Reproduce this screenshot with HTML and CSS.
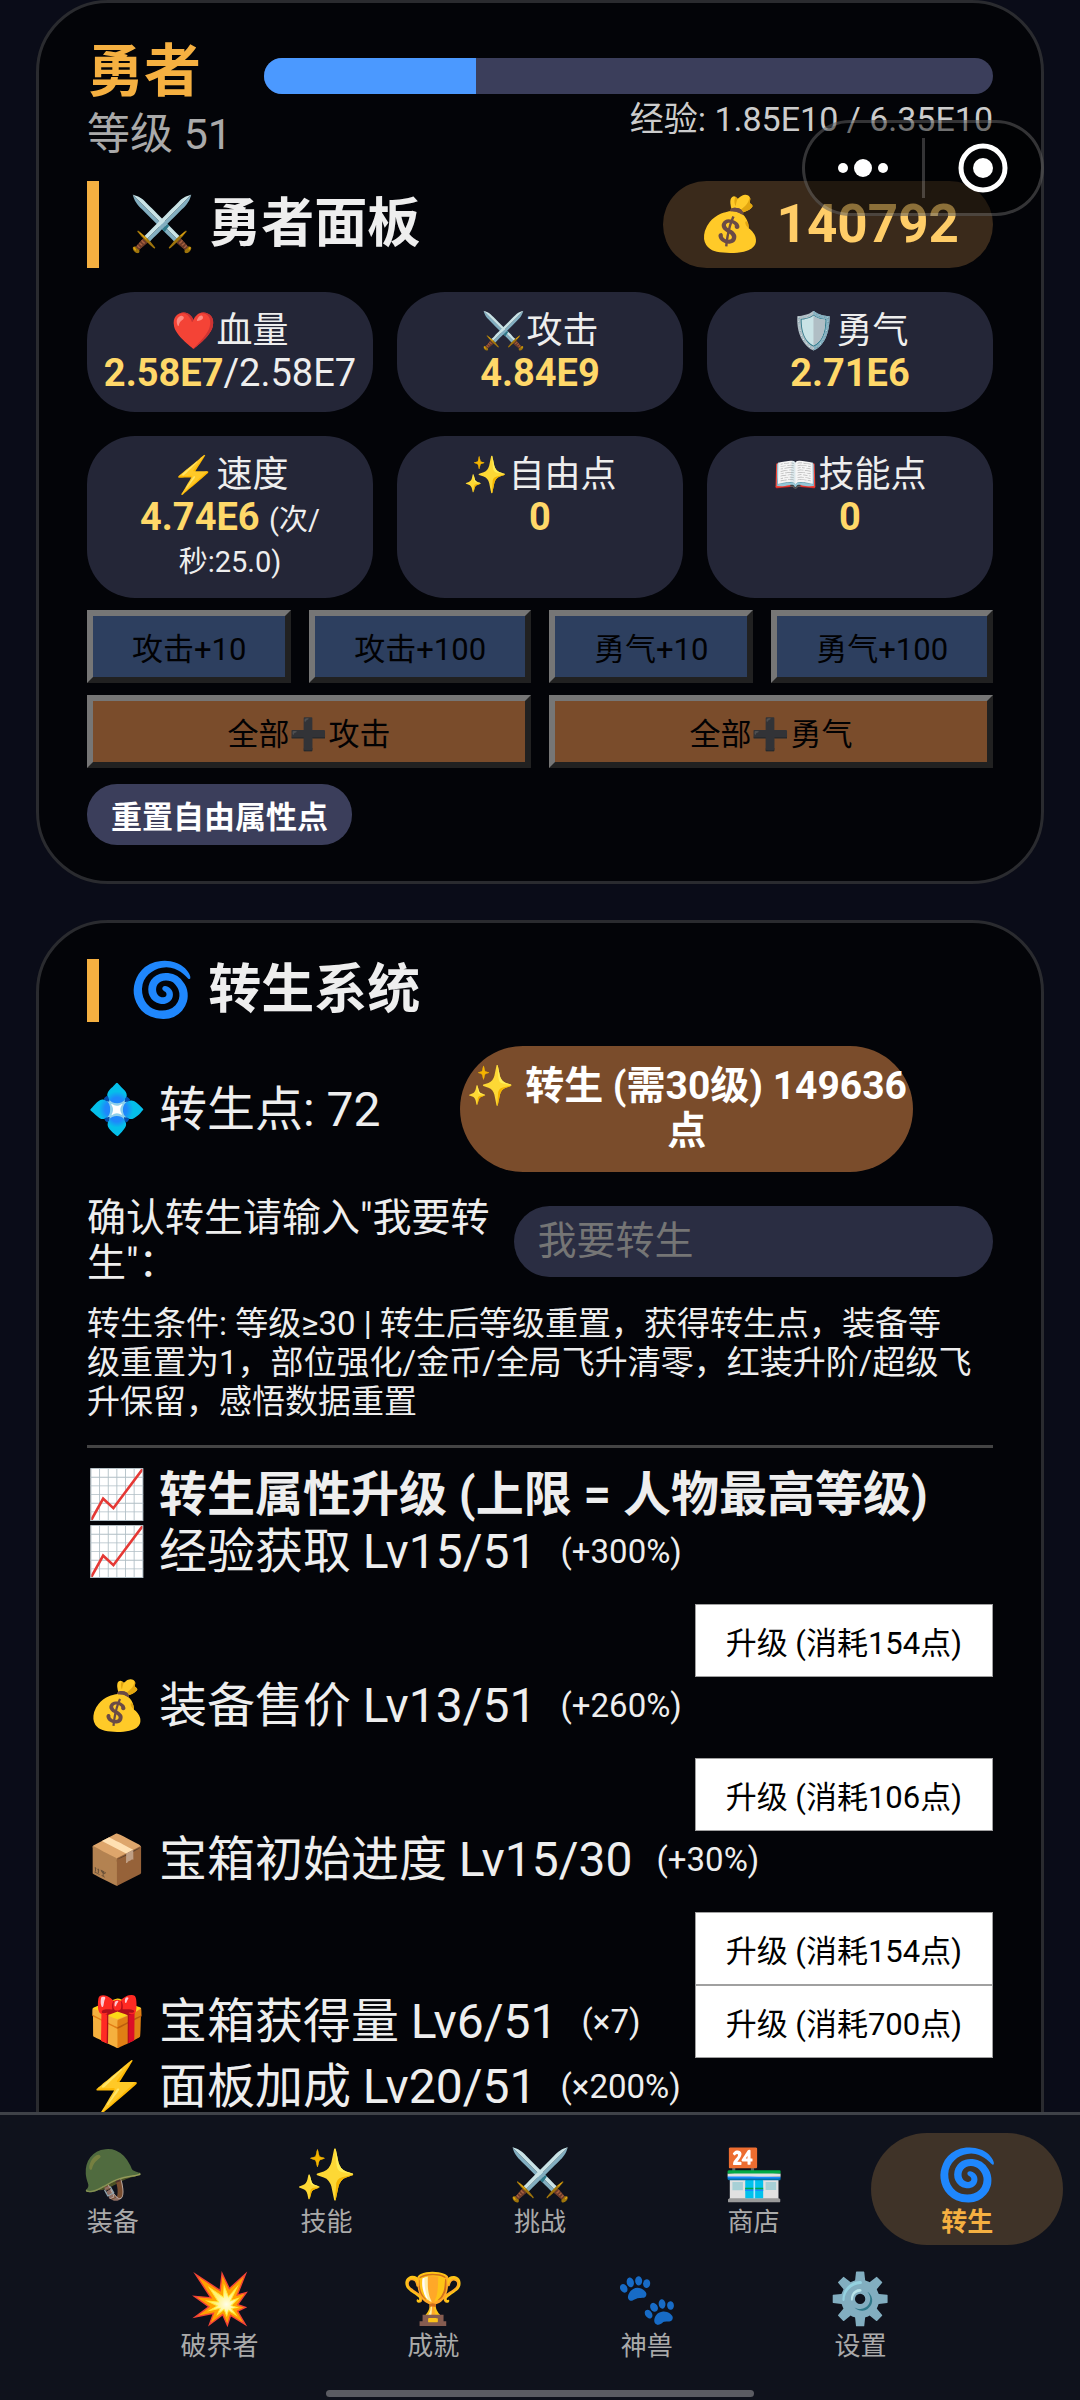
FILE: index.html
```html
<!DOCTYPE html>
<html lang="zh-CN">
<head>
    <meta charset="UTF-8">
    <meta name="viewport" content="width=device-width, initial-scale=1.0">
    <title>勇者</title>
    <link rel="stylesheet" href="styles.css">
</head>
<body>
    <main class="page">
        <section class="card">
            <div class="hero">
                <div class="hero-info">
                    <div class="hero-name">勇者</div>
                    <div class="hero-level">等级 51</div>
                </div>
                <div class="exp">
                    <div class="exp-bar"><div class="exp-fill" style="width: 29.1%"></div></div>
                    <div class="exp-text">经验: 1.85E10 / 6.35E10</div>
                </div>
            </div>

            <div class="title-row">
                <h2 class="title">⚔️ 勇者面板</h2>
                <div class="gold">💰 140792</div>
            </div>

            <div class="stats">
                <div class="stat"><div class="stat-label">❤️血量</div><b>2.58E7</b>/2.58E7</div>
                <div class="stat"><div class="stat-label">⚔️攻击</div><b>4.84E9</b></div>
                <div class="stat"><div class="stat-label">🛡️勇气</div><b>2.71E6</b></div>
                <div class="stat"><div class="stat-label">⚡速度</div><b>4.74E6</b> <small>(次/<br>秒:25.0)</small></div>
                <div class="stat"><div class="stat-label">✨自由点</div><b>0</b></div>
                <div class="stat"><div class="stat-label">📖技能点</div><b>0</b></div>
            </div>

            <div class="points">
                <div class="point-group">
                    <button class="point-btn" disabled>攻击+10</button>
                    <button class="point-btn" disabled>攻击+100</button>
                </div>
                <div class="point-group">
                    <button class="point-btn" disabled>勇气+10</button>
                    <button class="point-btn" disabled>勇气+100</button>
                </div>
                <button class="point-btn all" disabled>全部➕攻击</button>
                <button class="point-btn all" disabled>全部➕勇气</button>
            </div>
            <button class="reset-btn">重置自由属性点</button>
        </section>

        <section class="card">
            <h2 class="title">🌀 转生系统</h2>

            <div class="rebirth">
                <div class="rebirth-points">💠 转生点: 72</div>
                <button class="rebirth-btn">✨ 转生 (需30级) 149636<br>点</button>
            </div>

            <div class="confirm">
                <label for="confirm">确认转生请输入"我要转<br>生"：</label>
                <input type="text" id="confirm" placeholder="我要转生">
            </div>

            <p class="rules">转生条件: 等级≥30 | 转生后等级重置，获得转生点，装备等<br>级重置为1，部位强化/金币/全局飞升清零，红装升阶/超级飞<br>升保留，感悟数据重置</p>

            <div class="upgrades">
                <h3>📈 转生属性升级 (上限 = 人物最高等级)</h3>
                <div class="upgrade wide">
                    <span class="upgrade-name">📈 经验获取 Lv15/51 <small>(+300%)</small></span>
                    <button class="upgrade-btn">升级 (消耗154点)</button>
                </div>
                <div class="upgrade wide">
                    <span class="upgrade-name">💰 装备售价 Lv13/51 <small>(+260%)</small></span>
                    <button class="upgrade-btn">升级 (消耗106点)</button>
                </div>
                <div class="upgrade wide">
                    <span class="upgrade-name">📦 宝箱初始进度 Lv15/30 <small>(+30%)</small></span>
                    <button class="upgrade-btn">升级 (消耗154点)</button>
                </div>
                <div class="upgrade">
                    <span class="upgrade-name">🎁 宝箱获得量 Lv6/51 <small>(×7)</small></span>
                    <button class="upgrade-btn">升级 (消耗700点)</button>
                </div>
                <div class="upgrade wide">
                    <span class="upgrade-name">⚡ 面板加成 Lv20/51 <small>(×200%)</small></span>
                </div>
            </div>
        </section>
    </main>

    <nav class="tabs">
        <a class="tab" href="#equip"><span class="tab-icon">🪖</span>装备</a>
        <a class="tab" href="#skill"><span class="tab-icon">✨</span>技能</a>
        <a class="tab" href="#battle"><span class="tab-icon">⚔️</span>挑战</a>
        <a class="tab" href="#shop"><span class="tab-icon">🏪</span>商店</a>
        <a class="tab active" href="#rebirth"><span class="tab-icon">🌀</span>转生</a>
        <a class="tab" href="#breaker"><span class="tab-icon">💥</span>破界者</a>
        <a class="tab" href="#awards"><span class="tab-icon">🏆</span>成就</a>
        <a class="tab" href="#pets"><span class="tab-icon">🐾</span>神兽</a>
        <a class="tab" href="#settings"><span class="tab-icon">⚙️</span>设置</a>
        <div class="home-bar"></div>
    </nav>

    <!-- floating mini program menu -->
    <div class="capsule">
        <button class="capsule-btn" aria-label="更多">
            <svg width="50" height="20" viewBox="0 0 50 20" fill="#fff">
                <circle cx="5" cy="10" r="5"/><circle cx="25" cy="10" r="9"/><circle cx="45" cy="10" r="5"/>
            </svg>
        </button>
        <div class="capsule-line"></div>
        <button class="capsule-btn" aria-label="关闭">
            <svg width="50" height="50" viewBox="0 0 50 50">
                <circle cx="25" cy="25" r="22" fill="none" stroke="#fff" stroke-width="5"/>
                <circle cx="25" cy="25" r="10" fill="#fff"/>
            </svg>
        </button>
    </div>
</body>
</html>
```
FILE: styles.css
```css
:root {
    --bg: #0a0c18;
    --card: #030408;
    --text: #eeeeee;
    --muted: #aaaaaa;
    --accent: #f5b041;
    --gold: #ffd869;
}

* {
    box-sizing: border-box;
}

body {
    margin: 0;
    height: 100vh;
    display: flex;
    flex-direction: column;
    background: var(--bg);
    color: var(--text);
    font-family: Roboto, "Noto Sans CJK SC", sans-serif;
}

button,
input {
    font-family: inherit;
    margin: 0;
}

h2, h3, p {
    margin: 0;
}

.page {
    flex: 1;
    min-height: 0;
    overflow-y: auto;
    scrollbar-width: none;
    padding: 0 36px;
}

.card {
    margin-bottom: 36px;
    padding: 36px 48px;
    background: var(--card);
    border: 3px solid #2a2b2f;
    border-radius: 72px;
}

/* hero header */
.hero {
    display: flex;
    align-items: center;
    gap: 32px;
    margin-bottom: 18px;
}

.hero-info {
    white-space: nowrap;
}

.hero-name {
    color: var(--accent);
    font-size: 57px;
    font-weight: bold;
    line-height: 66px;
}

.hero-level {
    color: var(--muted);
    font-size: 43px;
    line-height: 58px;
}

.exp {
    flex: 1;
}

.exp-bar {
    height: 36px;
    border-radius: 18px;
    background: #3b3e5b;
    overflow: hidden;
}

.exp-fill {
    height: 100%;
    background: #4b99ff;
}

.exp-text {
    color: #cccccc;
    font-size: 34px;
    line-height: 50px;
    text-align: right;
}

.title-row {
    display: flex;
    justify-content: space-between;
    margin-bottom: 24px;
}

.title {
    display: flex;
    align-items: center;
    padding-left: 30px;
    border-left: 12px solid var(--accent);
    font-size: 53px;
    line-height: 63px;
}

.gold {
    padding: 12px 34px;
    border-radius: 44px;
    background: #3a2a1b;
    color: #ffcd68;
    font-size: 53px;
    font-weight: bold;
    line-height: 63px;
}

/* stats */
.stats {
    display: grid;
    grid-template-columns: repeat(3, 1fr);
    gap: 24px;
    margin-bottom: 12px;
}

.stat {
    padding: 18px 12px;
    border-radius: 48px;
    background: #242637;
    font-size: 38px;
    line-height: 42px;
    text-align: center;
}

.stat-label {
    font-size: 36px;
}

.stat b {
    color: var(--gold);
}

.stat small {
    font-size: 29px;
    line-height: 29px;
}

.points {
    display: grid;
    grid-template-columns: 1fr 1fr;
    gap: 12px 18px;
    margin-bottom: 16px;
}

.point-group {
    display: flex;
    gap: 18px;
}

.point-btn {
    flex: 1 1 auto;
    height: 73px;
    padding: 0;
    border: 6px solid;
    border-color: #e9e8e4 #3f3e3a #3f3e3a #e9e8e4;
    background: #577ab6;
    color: #000;
    font-size: 31px;
    opacity: 0.5;
}

.point-btn.all {
    background: #f1944e;
}

.reset-btn {
    display: block;
    height: 61px;
    padding: 0 24px;
    border: 0;
    border-radius: 30px;
    background: #3b3e5b;
    color: #fff;
    font-size: 31px;
    font-weight: bold;
}

/* rebirth */
.rebirth {
    display: flex;
    align-items: center;
    margin: 24px 0;
}

.rebirth-points {
    font-size: 48px;
    line-height: 57px;
}

.rebirth-btn {
    flex: 0 0 50%;
    margin: 0 auto;
    padding: 18px 0;
    border: 0;
    border-radius: 64px;
    background: #7a4c2b;
    color: #fff;
    font-size: 39px;
    font-weight: bold;
    line-height: 45px;
    white-space: nowrap;
}

.confirm {
    display: flex;
    align-items: center;
    gap: 24px;
    margin-bottom: 18px;
    font-size: 39px;
    line-height: 45px;
}

.confirm label {
    flex: 1;
    white-space: nowrap;
}

.confirm input {
    width: 53%;
    height: 71px;
    padding: 0 24px;
    border: 0;
    border-radius: 36px;
    background: #2a2d42;
    color: var(--text);
    font-size: 39px;
}

.confirm input::placeholder {
    color: #757575;
}

.rules {
    margin-bottom: 24px;
    font-size: 33px;
    line-height: 39px;
}

.upgrades {
    padding: 18px 0 96px;
    border-top: 3px solid #444444;
    font-size: 48px;
    line-height: 57px;
}

.upgrades h3 {
    font-size: 48px;
    white-space: nowrap;
}

.upgrade {
    display: flex;
    flex-wrap: wrap;
    align-items: center;
    justify-content: flex-end;
    row-gap: 24px;
}

.upgrade-name {
    flex: 1;
    display: flex;
    align-items: center;
    gap: 24px;
    white-space: nowrap;
}

.upgrade.wide .upgrade-name {
    flex-basis: 100%;
}

.upgrade-name small {
    font-size: 33px;
}

.upgrade-btn {
    height: 73px;
    padding: 0 30px;
    border: 1px solid #a0a0a0;
    background: #fff;
    color: #000;
    font-size: 31px;
}

/* bottom tabs */
.tabs {
    display: flex;
    flex-wrap: wrap;
    justify-content: center;
    gap: 12px 2%;
    padding: 18px 6px 3px;
    border-top: 3px solid #3f4248;
    background: #0f121c;
}

.tab {
    display: flex;
    flex-direction: column;
    align-items: center;
    width: 18%;
    height: 112px;
    padding-top: 10px;
    border-radius: 56px;
    color: var(--muted);
    font-size: 26px;
    line-height: 30px;
    text-decoration: none;
}

.tab-icon {
    font-size: 50px;
    line-height: 64px;
}

.tab.active {
    background: #3f3328;
    color: var(--accent);
    font-weight: bold;
}

.home-bar {
    width: 40%;
    height: 7px;
    margin: 9px 25% 0;
    border-radius: 4px;
    background: #5b5c62;
}

.capsule {
    position: fixed;
    top: 120px;
    right: 36px;
    display: flex;
    align-items: center;
    width: 242px;
    height: 96px;
    border: 3px solid rgba(255, 255, 255, 0.2);
    border-radius: 48px;
    background: rgba(0, 0, 0, 0.45);
}

.capsule-btn {
    flex: 1;
    display: flex;
    align-items: center;
    justify-content: center;
    padding: 0;
    border: 0;
    background: none;
}

.capsule-line {
    width: 3px;
    height: 60px;
    background: rgba(255, 255, 255, 0.2);
}
```
